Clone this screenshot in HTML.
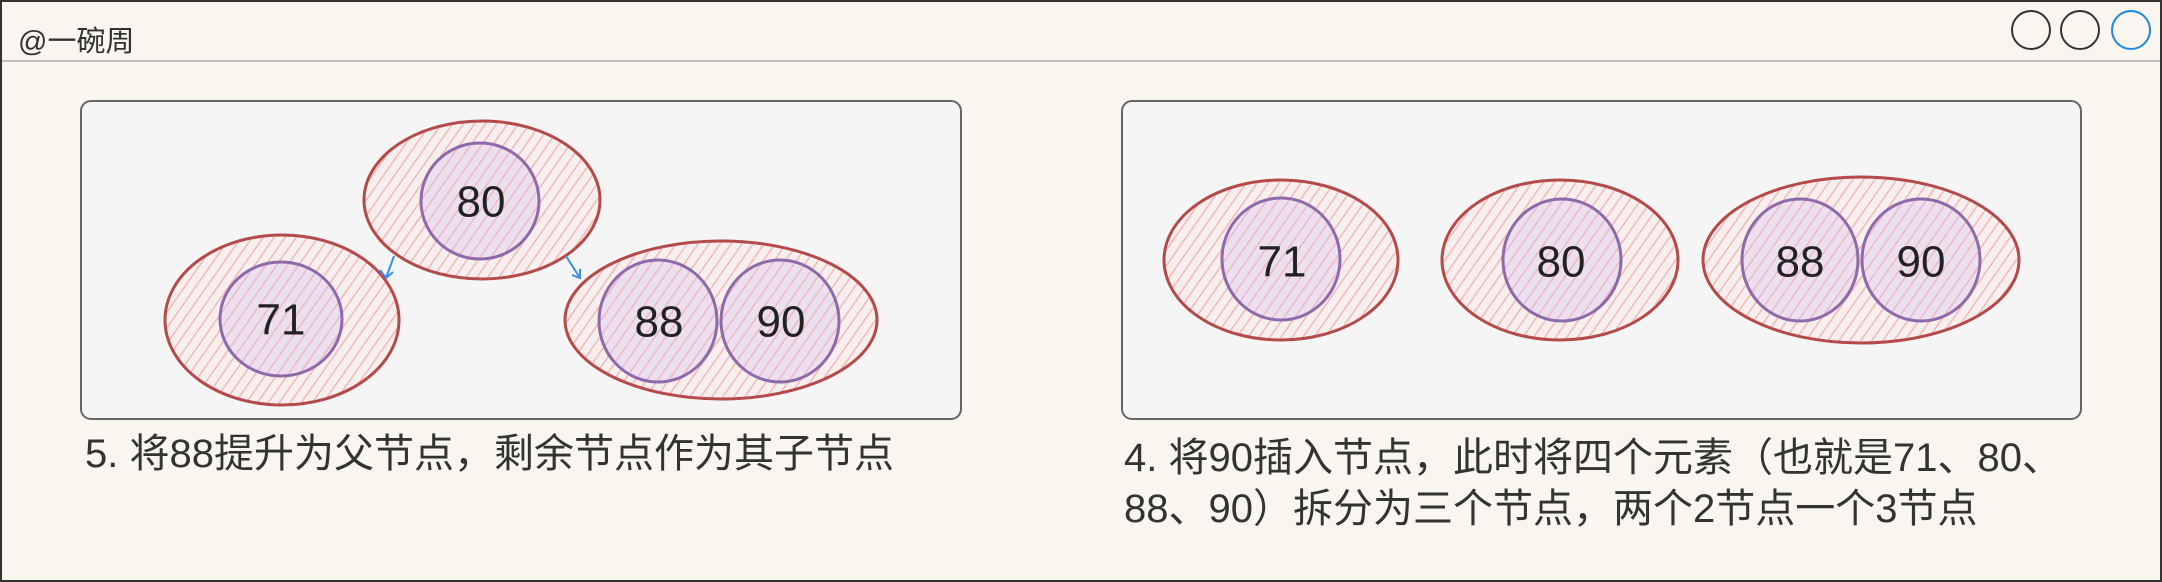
<!DOCTYPE html>
<html><head><meta charset="utf-8"><style>
html,body{margin:0;padding:0;}
body{width:2162px;height:582px;background:#f8f6ee;position:relative;overflow:hidden;font-family:"Liberation Sans","Noto Sans CJK SC",sans-serif;}
.frame{position:absolute;left:0;top:0;width:2158px;height:578px;border:2px solid #333;}
.bar{position:absolute;left:2px;top:60px;width:2158px;height:2px;background:#bdbdbd;}
.title{position:absolute;left:18px;top:18px;font-size:29px;color:#333;}
.cap{position:absolute;font-size:40px;color:#333;line-height:51px;white-space:nowrap;}
</style></head><body>
<div class="frame"></div>
<div class="bar"></div>
<div class="title">@一碗周</div>
<svg width="2162" height="582" style="position:absolute;left:0;top:0">
<defs>
<pattern id="h" width="9" height="9" patternUnits="userSpaceOnUse" patternTransform="rotate(35)">
<rect width="9" height="9" fill="#f7eeee"/><line x1="0" y1="0" x2="0" y2="9" stroke="#f3b8b8" stroke-width="3"/></pattern>
<pattern id="p" width="9" height="9" patternUnits="userSpaceOnUse" patternTransform="rotate(35)">
<rect width="9" height="9" fill="#ece0ee"/><line x1="0" y1="0" x2="0" y2="9" stroke="#eab8c8" stroke-width="3"/></pattern>
</defs>
<circle cx="2031" cy="30" r="19" fill="none" stroke="#333" stroke-width="2"/>
<circle cx="2080" cy="30" r="19" fill="none" stroke="#333" stroke-width="2"/>
<circle cx="2131" cy="30" r="19" fill="none" stroke="#1e88e5" stroke-width="2"/>
<rect x="81" y="101" width="880" height="318" rx="10" fill="#f5f5f5" stroke="#666" stroke-width="2"/>
<rect x="1122" y="101" width="959" height="318" rx="10" fill="#f5f5f5" stroke="#666" stroke-width="2"/>
<g stroke="#b44a4a" stroke-width="3" fill="url(#h)">
<ellipse cx="482" cy="200" rx="118" ry="79"/>
<ellipse cx="282" cy="320" rx="117" ry="85"/>
<ellipse cx="721" cy="320" rx="156" ry="79"/>
<ellipse cx="1281" cy="260" rx="117" ry="80"/>
<ellipse cx="1560" cy="260" rx="118" ry="80"/>
<ellipse cx="1861" cy="260" rx="158" ry="83"/>
</g>
<g stroke="#8e6aaa" stroke-width="3" fill="url(#p)">
<ellipse cx="480" cy="201" rx="59" ry="58"/>
<ellipse cx="281" cy="319" rx="61" ry="57"/>
<ellipse cx="658" cy="321" rx="59" ry="61"/>
<ellipse cx="780" cy="321" rx="59" ry="61"/>
<ellipse cx="1281" cy="259" rx="59" ry="61"/>
<ellipse cx="1562" cy="260" rx="59" ry="61"/>
<ellipse cx="1800" cy="260" rx="58" ry="61"/>
<ellipse cx="1921" cy="260" rx="59" ry="61"/>
</g>
<g stroke="#3a8ee6" stroke-width="2" fill="none">
<path d="M394 256 L386 278 M380 270 L386 278 L393 272"/>
<path d="M566 256 L580 278 M572 275 L580 278 L580 269"/>
</g>
<g font-family="Liberation Sans, sans-serif" font-size="44" fill="#222" text-anchor="middle" dominant-baseline="central">
<text x="481" y="202">80</text>
<text x="281" y="320">71</text>
<text x="659" y="322">88</text>
<text x="781" y="322">90</text>
<text x="1282" y="262">71</text>
<text x="1561" y="262">80</text>
<text x="1800" y="262">88</text>
<text x="1921" y="262">90</text>
</g>
</svg>
<div class="cap" style="left:85px;top:429px;">5. 将88提升为父节点，剩余节点作为其子节点</div>
<div class="cap" style="left:1124px;top:433px;">4. 将90插入节点，此时将四个元素（也就是71、80、<br>88、90）拆分为三个节点，两个2节点一个3节点</div>
</body></html>
